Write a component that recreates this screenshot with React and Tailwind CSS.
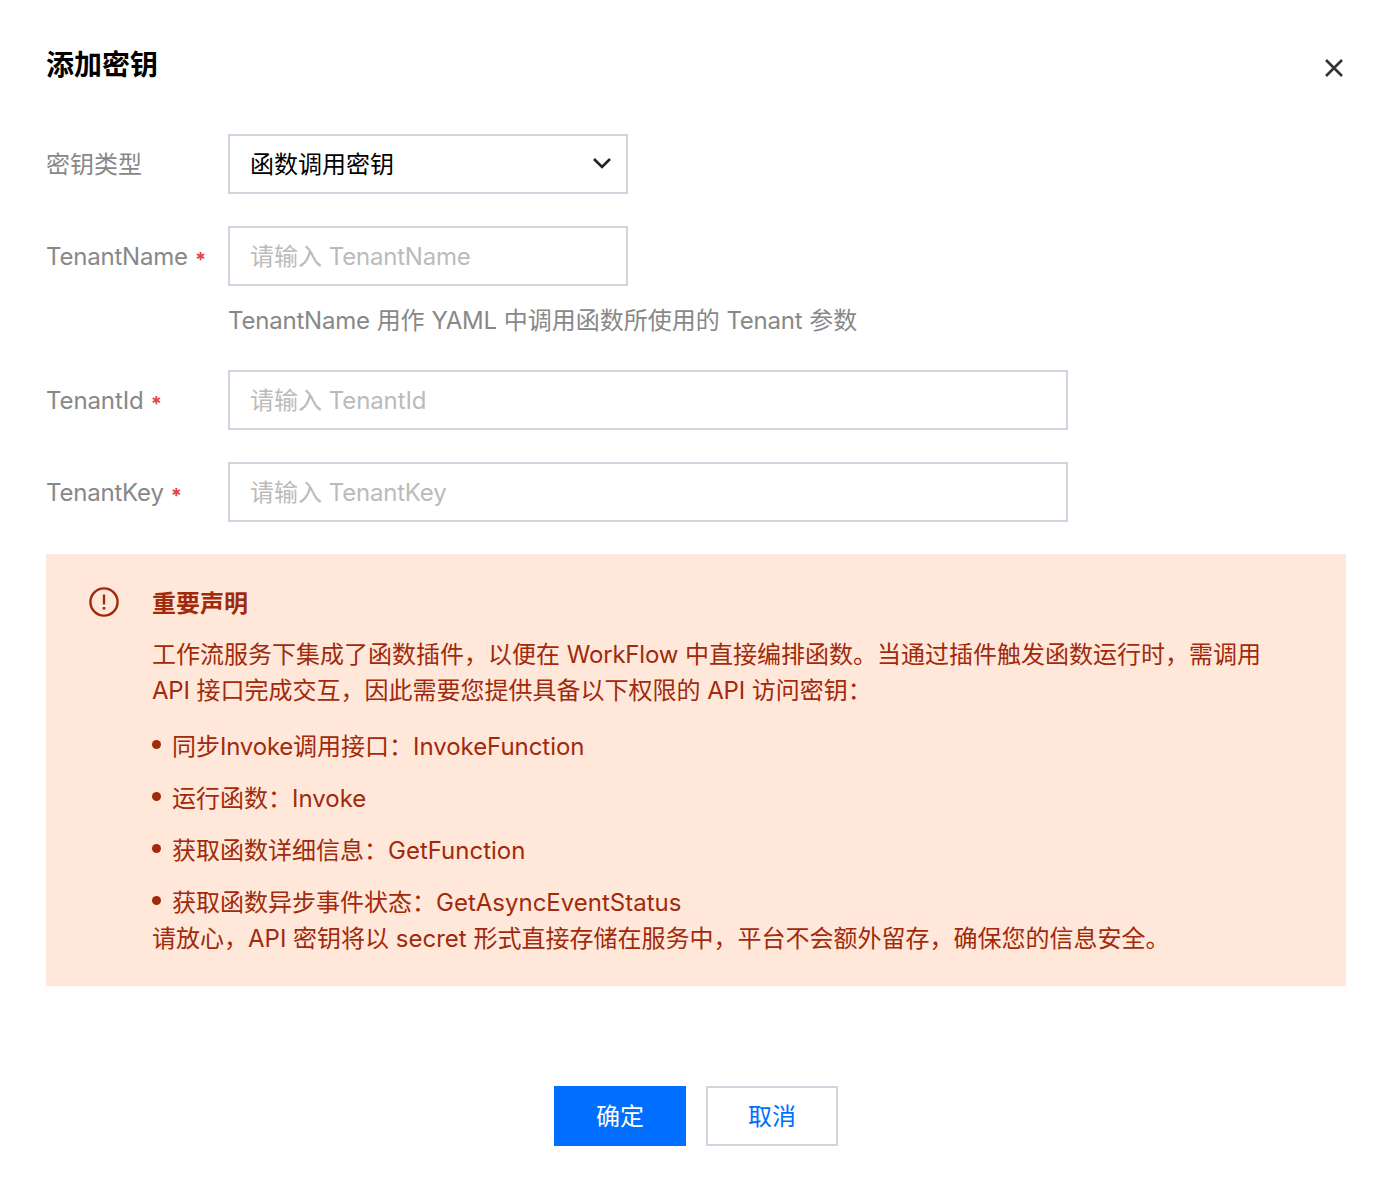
import React from "react";

function L({ children }) {
  return <span className="tracking-[-0.2px]">{children}</span>;
}

function Field({ label, required, placeholder, wide, help, nameClass = "tracking-[-0.2px]" }) {
  return (
    <div className="flex items-start">
      <div className="w-[182px] h-[60px] pt-[2px] flex items-center text-[24px] text-[#888888] leading-[36px]">
        <span className={nameClass}>{label}</span>
        {required && <span className="ml-[7px] mt-[6px] text-[#e54545] text-[20px] font-bold leading-none">*</span>}
      </div>
      <div className="flex flex-col">
        <div className={`${wide ? "w-[840px]" : "w-[400px]"} h-[60px] border-2 border-[#cfd5de] pl-[20px] pr-[21px] pt-[2px] flex items-center text-[24px] text-[#bbbbbb] whitespace-pre`}>
          {"请输入 "}<span className={nameClass}>{placeholder}</span>
        </div>
        {help && <div className="mt-[17px] text-[24px] leading-[36px] text-[#888888]">{help}</div>}
      </div>
    </div>
  );
}

function Li({ children }) {
  return (
    <li className="flex items-start h-[36px] leading-[36px]">
      <span className="w-[9px] h-[9px] rounded-full bg-[#a12a0c] mt-[11px] mr-[11px] shrink-0" />
      <span>{children}</span>
    </li>
  );
}

export default function App() {
  return (
    <div className="w-[1390px] h-[1186px] bg-white pl-[46px] pr-[44px] pt-[47px] font-['Inter','Noto_Sans_CJK_SC',sans-serif] overflow-hidden">
      <div className="flex items-center justify-between h-[36px]">
        <h2 className="text-[28px] leading-[36px] font-bold text-black">添加密钥</h2>
        <svg width="20" height="20" viewBox="0 0 20 20" className="mr-[2px] mt-[6px]" fill="none" stroke="#333333" strokeWidth="2.6">
          <path d="M2 2 L18 18 M18 2 L2 18" />
        </svg>
      </div>

      <div className="mt-[51px] flex flex-col gap-[32px]">
        <div className="flex items-start">
          <div className="w-[182px] h-[60px] pt-[2px] flex items-center text-[24px] text-[#888888]">密钥类型</div>
          <div className="w-[400px] h-[60px] border-2 border-[#cfd5de] pl-[20px] pr-[14px] flex items-center justify-between text-[24px] text-black">
            <span className="pt-[2px]">函数调用密钥</span>
            <svg width="20" height="12" viewBox="0 0 20 12" fill="none" stroke="#222222" strokeWidth="2.6" className="mb-[2px]">
              <path d="M2 2 L10 10 L18 2" />
            </svg>
          </div>
        </div>
        <Field
          label="TenantName"
          required
          placeholder="TenantName"
          help={<><L>TenantName</L> 用作 <L>YAML</L> 中调用函数所使用的 <L>Tenant</L> 参数</>}
        />
        <div className="-mt-[1px]"><Field label="TenantId" required placeholder="TenantId" wide nameClass="tracking-[-0.1px]" /></div>
        <Field label="TenantKey" required placeholder="TenantKey" wide />
      </div>

      <div className="mt-[32px] w-[1300px] h-[432px] bg-[#ffe8d9] flex pl-[43px] pt-[32px] text-[24px] text-[#a12a0c]">
        <svg width="30" height="30" viewBox="0 0 30 30" fill="none" className="mt-[1px] shrink-0">
          <circle cx="15" cy="15" r="13.6" stroke="#a12a0c" strokeWidth="2.4" />
          <path d="M15 7.5 V17.5" stroke="#a12a0c" strokeWidth="2.4" />
          <path d="M15 20 V22.6" stroke="#a12a0c" strokeWidth="2.6" />
        </svg>
        <div className="ml-[33px] w-[1130px]">
          <div className="font-bold leading-[36px]">重要声明</div>
          <p className="mt-[15px] leading-[36px]">
            工作流服务下集成了函数插件，以便在 <L>WorkFlow</L> 中直接编排函数。当通过插件触发函数运行时，需调用 <L>API</L> 接口完成交互，因此需要您提供具备以下权限的 <L>API</L> 访问密钥：
          </p>
          <ul className="mt-[20px] flex flex-col gap-[16px]">
            <Li>同步<L>Invoke</L>调用接口：<span className="tracking-[-0.05px]">InvokeFunction</span></Li>
            <Li>运行函数：Invoke</Li>
            <Li>获取函数详细信息：GetFunction</Li>
            <Li>获取函数异步事件状态：GetAsyncEventStatus</Li>
          </ul>
          <p className="leading-[36px]">请放心，API 密钥将以 secret 形式直接存储在服务中，平台不会额外留存，确保您的信息安全。</p>
        </div>
      </div>

      <div className="mt-[100px] flex justify-center gap-[20px] text-[24px]">
        <button className="w-[132px] h-[60px] pt-[2px] bg-[#006eff] text-white">确定</button>
        <button className="w-[132px] h-[60px] pt-[2px] border-2 border-[#cfd5de] bg-white text-[#006eff]">取消</button>
      </div>
    </div>
  );
}
